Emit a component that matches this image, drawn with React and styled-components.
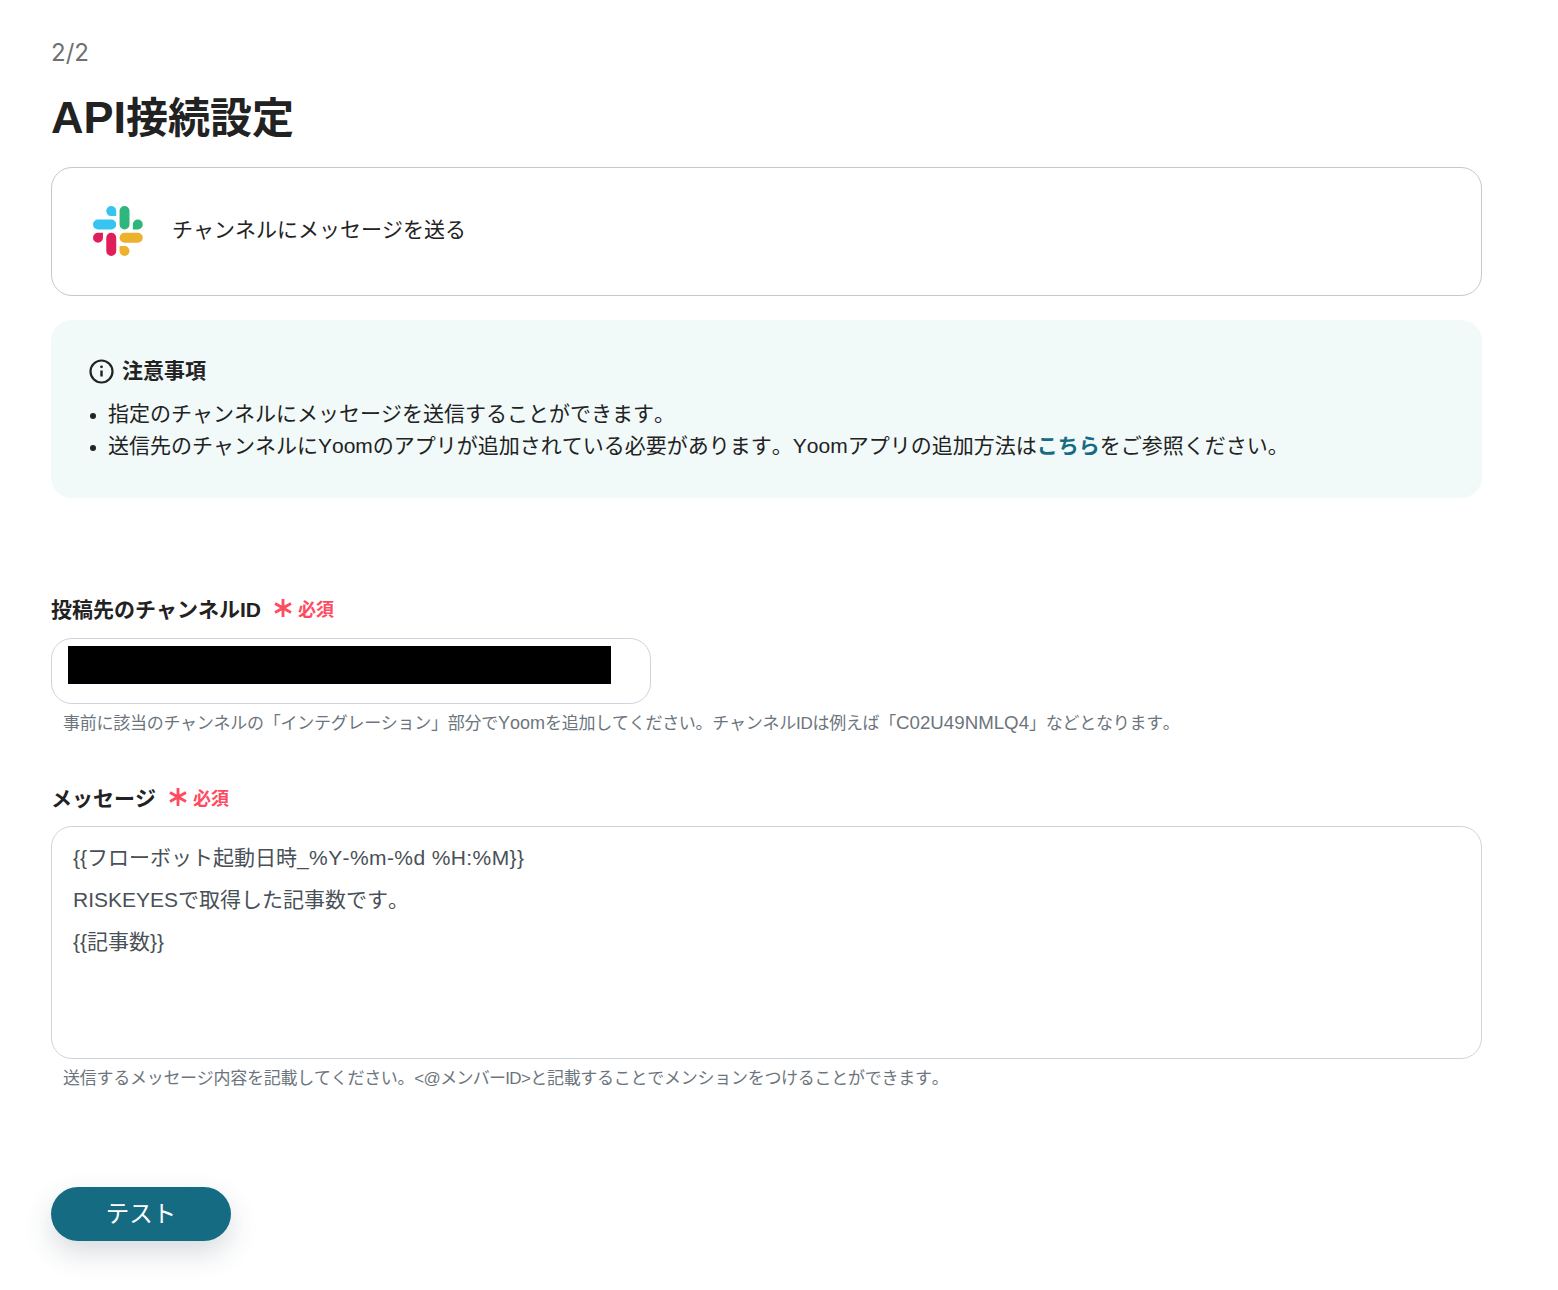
import styled, { createGlobalStyle } from "styled-components";

const GlobalStyle = createGlobalStyle`
  html, body {
    margin: 0;
    padding: 0;
    background: #fff;
  }
  body {
    font-family: "Liberation Sans", "Noto Sans CJK JP", sans-serif;
    font-kerning: none;
    color: #222;
  }
`;

const Page = styled.div`
  padding: 37px 76px 49px 51px;
`;

const Step = styled.div`
  font-family: "Inter", sans-serif;
  font-size: 24px;
  line-height: 32px;
  color: #707070;
`;

const Title = styled.h1`
  margin: 17px 0 0;
  height: 64px;
  font-size: 42px;
  line-height: 64px;
  font-weight: 700;
  color: #222;
`;

const TitleLatin = styled.span`
  font-size: 45px;
`;

const ActionCard = styled.div`
  margin-top: 17px;
  height: 129px;
  box-sizing: border-box;
  border: 1px solid #c8c8c8;
  border-radius: 21px;
  padding: 0 41px 2px;
  display: flex;
  align-items: center;
  gap: 29px;
  font-size: 21px;
  line-height: 32px;
`;

const ActionName = styled.span`
  margin-bottom: 2px;
`;

const Note = styled.div`
  margin-top: 24px;
  height: 178px;
  box-sizing: border-box;
  background: #f1f9f9;
  border-radius: 21px;
  padding: 35px 38px;
`;

const NoteHead = styled.div`
  display: flex;
  align-items: center;
  gap: 8px;
  font-size: 21px;
  line-height: 32px;
  font-weight: 700;
`;

const NoteList = styled.ul`
  margin: 11px 0 0;
  padding: 0 0 0 19px;
  font-size: 21px;
  line-height: 32px;
  li::marker {
    font-size: 19px;
  }
`;

const Link = styled.a`
  color: #156b82;
  font-weight: 700;
`;

const Field = styled.div`
  margin-top: ${(p) => p.$top}px;
`;

const LabelRow = styled.div`
  display: flex;
  align-items: center;
  gap: 13px;
  height: 32px;
  margin-top: -2px;
  font-size: 21px;
  font-weight: 700;
`;

const Required = styled.span`
  display: inline-flex;
  align-items: center;
  gap: 6px;
  font-size: 18px;
  color: #ff4b5f;
`;

const InputBox = styled.div`
  margin-top: 14px;
  width: 600px;
  height: 66px;
  box-sizing: border-box;
  border: 1px solid #ced4de;
  border-radius: 21px;
  padding: 7px 0 0 16px;
`;

const Redacted = styled.div`
  width: 543px;
  height: 38px;
  background: #000;
`;

const TextBox = styled.div`
  margin: 13px 0 7px;
  height: 233px;
  box-sizing: border-box;
  border: 1px solid #ced4de;
  border-radius: 21px;
  padding: 10px 21px;
  font-size: 21px;
  line-height: 42px;
  color: #495057;
`;

const Token = styled.span`
  letter-spacing: 0.4px;
`;

const Help = styled.div`
  margin: 6px 0 0 12px;
  font-size: 17px;
  line-height: 25px;
  color: #6c757d;
  letter-spacing: -0.27px;
`;

const HelpLatin = styled.span`
  font-size: ${(p) => p.$size}px;
  letter-spacing: 0;
`;

const HelpTight = styled.span`
  letter-spacing: -0.7px;
`;

const TestButton = styled.button`
  display: block;
  margin-top: 96px;
  width: 180px;
  height: 54px;
  padding: 0 0 4px;
  border: 0;
  border-radius: 27px;
  background: #156b82;
  color: #fff;
  font-family: inherit;
  font-size: 23.5px;
  box-shadow: 0 12px 28px rgba(40, 60, 80, 0.18);
`;

const SlackLogo = () => (
  <svg width="50" height="50" viewBox="0 0 54 54">
    <path fill="#36C5F0" d="M19.712.133a5.381 5.381 0 0 0-5.376 5.387 5.381 5.381 0 0 0 5.376 5.386h5.376V5.52A5.381 5.381 0 0 0 19.712.133m0 14.365H5.376A5.381 5.381 0 0 0 0 19.884a5.381 5.381 0 0 0 5.376 5.387h14.336a5.381 5.381 0 0 0 5.376-5.387 5.381 5.381 0 0 0-5.376-5.386" />
    <path fill="#2EB67D" d="M53.76 19.884a5.381 5.381 0 0 0-5.376-5.386 5.381 5.381 0 0 0-5.376 5.386v5.387h5.376a5.381 5.381 0 0 0 5.376-5.387m-14.336 0V5.52A5.381 5.381 0 0 0 34.048.133a5.381 5.381 0 0 0-5.376 5.387v14.364a5.381 5.381 0 0 0 5.376 5.387 5.381 5.381 0 0 0 5.376-5.387" />
    <path fill="#ECB22E" d="M34.048 54a5.381 5.381 0 0 0 5.376-5.387 5.381 5.381 0 0 0-5.376-5.386h-5.376v5.386A5.381 5.381 0 0 0 34.048 54m0-14.365h14.336a5.381 5.381 0 0 0 5.376-5.386 5.381 5.381 0 0 0-5.376-5.387H34.048a5.381 5.381 0 0 0-5.376 5.387 5.381 5.381 0 0 0 5.376 5.386" />
    <path fill="#E01E5A" d="M0 34.249a5.381 5.381 0 0 0 5.376 5.386 5.381 5.381 0 0 0 5.376-5.386v-5.387H5.376A5.381 5.381 0 0 0 0 34.25m14.336-.001v14.364A5.381 5.381 0 0 0 19.712 54a5.381 5.381 0 0 0 5.376-5.387V34.25a5.381 5.381 0 0 0-5.376-5.387 5.381 5.381 0 0 0-5.376 5.387" />
  </svg>
);

const InfoIcon = () => (
  <svg width="25" height="25" viewBox="0 0 25 25" fill="none" stroke="#222" strokeWidth="2.2">
    <circle cx="12.5" cy="12.5" r="11" />
    <path d="M12.5 11.5v6" strokeWidth="2.4" />
    <circle cx="12.5" cy="7.8" r="1.4" fill="#222" stroke="none" />
  </svg>
);

const Star = () => (
  <svg width="18" height="18" viewBox="0 0 18 18" stroke="#ff4b5f" strokeWidth="2.8">
    <path d="M9 0v18M1 4.5l16 9M17 4.5l-16 9" />
  </svg>
);

const RequiredMark = () => (
  <Required>
    <Star />
    必須
  </Required>
);

export default function App() {
  return (
    <Page>
      <GlobalStyle />
      <Step>2/2</Step>
      <Title>
        <TitleLatin>API</TitleLatin>接続設定
      </Title>
      <ActionCard>
        <SlackLogo />
        <ActionName>チャンネルにメッセージを送る</ActionName>
      </ActionCard>
      <Note>
        <NoteHead>
          <InfoIcon />
          注意事項
        </NoteHead>
        <NoteList>
          <li>指定のチャンネルにメッセージを送信することができます。</li>
          <li>
            送信先のチャンネルにYoomのアプリが追加されている必要があります。Yoomアプリの追加方法は
            <Link>こちら</Link>
            をご参照ください。
          </li>
        </NoteList>
      </Note>
      <Field $top={96}>
        <LabelRow>
          投稿先のチャンネルID
          <RequiredMark />
        </LabelRow>
        <InputBox>
          <Redacted />
        </InputBox>
        <Help>
          事前に該当のチャンネルの「インテグレーション」部分で
          <HelpLatin $size={18}>Yoom</HelpLatin>
          を追加してください。チャンネルIDは例えば「
          <HelpLatin $size={18.7}>C02U49NMLQ4</HelpLatin>」などとなります。
        </Help>
      </Field>
      <Field $top={47}>
        <LabelRow>
          メッセージ
          <RequiredMark />
        </LabelRow>
        <TextBox>
          <div>
            {"{{フローボット起動日時"}
            <Token>{"_%Y-%m-%d %H:%M}}"}</Token>
          </div>
          <div>RISKEYESで取得した記事数です。</div>
          <div>{"{{記事数}}"}</div>
        </TextBox>
        <Help>
          送信するメッセージ内容を記載してください。
          <HelpTight>&lt;@メンバーID&gt;</HelpTight>
          と記載することでメンションをつけることができます。
        </Help>
      </Field>
      <TestButton>テスト</TestButton>
    </Page>
  );
}
